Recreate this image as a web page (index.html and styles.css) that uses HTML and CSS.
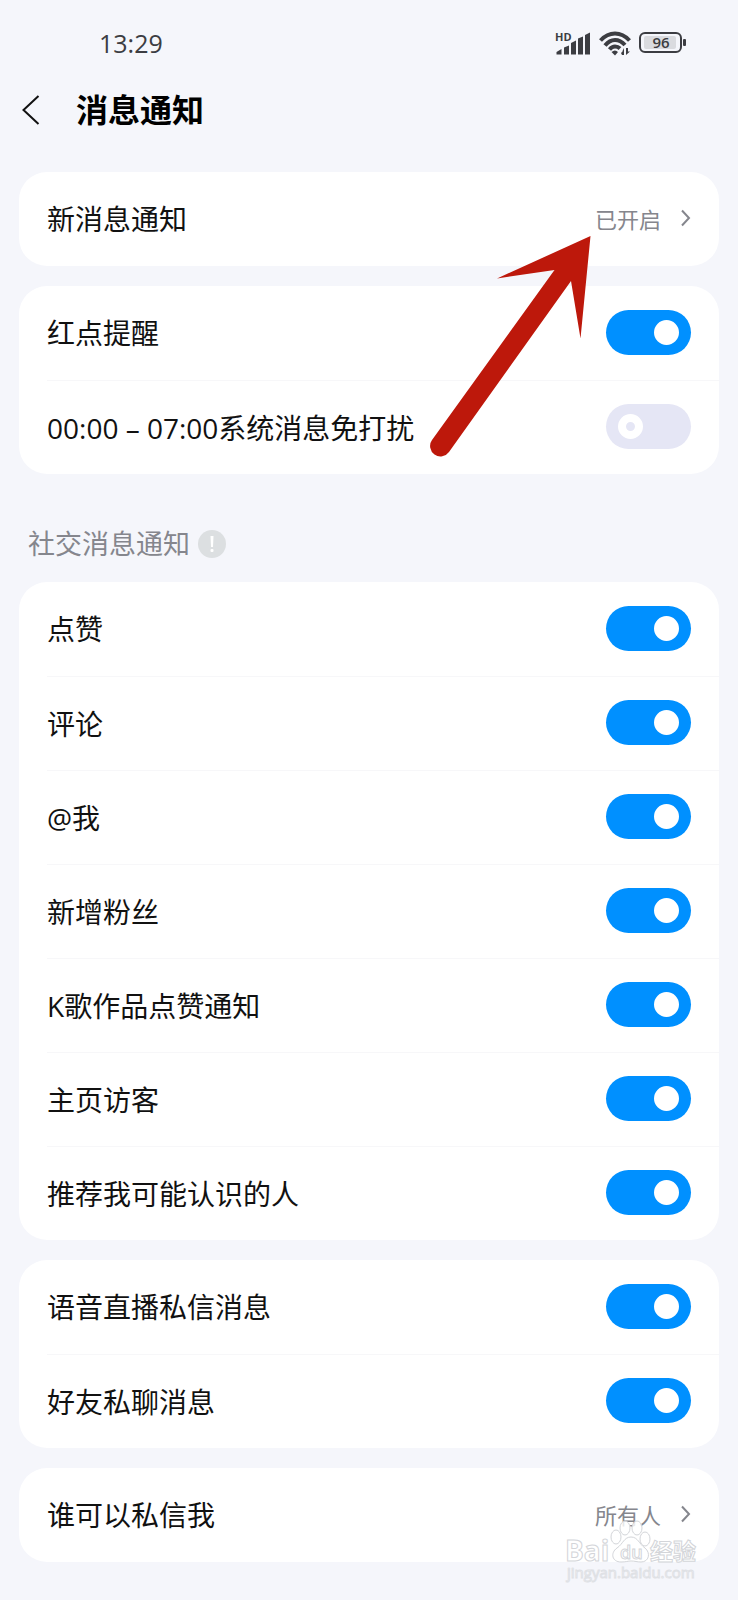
FILE: index.html
```html
<!DOCTYPE html>
<html lang="zh-CN">

<head>
	<meta charset="UTF-8">
	<meta name="viewport" content="width=device-width, initial-scale=1.0">
	<title>消息通知</title>
	<link rel="stylesheet" href="styles.css">
</head>

<body>
	<div class="statusbar">
		<span class="clock">13:29</span>
		<div class="status-icons">
			<svg class="signal" width="36" height="26" viewBox="0 0 36 26">
				<text x="0" y="11">HD</text>
				<path d="M1.500 24.500V22L6.500 19v5.500zM9 24.500v-7l5-2v9zM16 24.500V13l5-2.500v14zM23 24.500V8.500l5-2v18zM30 24.500V5l5-2.500v22z" />
			</svg>
			<svg class="wifi" width="32" height="25" viewBox="0 0 32 25">
				<path class="arc" d="M1.500 9.500Q8 2.500 16 2.500T30.500 9.500" />
				<path class="arc" d="M6 14.500Q10.500 9 16 9T26 14" />
				<path class="arc" d="M10.500 18.500Q13 15.500 16 15.500T21 17.500" />
				<path d="M12.500 21Q16 18 19 21L16 24.500z" />
				<path d="M22 22l3-3v5h-2zM27 17v7l4-3.500h-2V17zM25 17v7h-1.500v-4z" />
			</svg>
			<svg class="battery" width="48" height="22" viewBox="0 0 48 22">
				<rect class="shell" x="1" y="1" width="41" height="19" rx="5" />
				<rect class="level" x="5" y="4" width="32" height="13" rx="2" />
				<rect x="44" y="7" width="3" height="7" rx="1" />
				<text x="22" y="16">96</text>
			</svg>
		</div>
	</div>

	<header class="titlebar">
		<button class="back" type="button" aria-label="返回">
			<svg width="18" height="30" viewBox="0 0 18 30">
				<path d="M16.500 1L1.500 15L16.500 29" />
			</svg>
		</button>
		<h1>消息通知</h1>
	</header>

	<main class="settings">
		<section class="card first">
			<a class="row" href="#">
				<span>新消息通知</span>
				<span class="value">已开启
					<svg class="chevron" width="10" height="18" viewBox="0 0 10 18">
						<path d="M1 1.500l7 7.500l-7 7.500" />
					</svg>
				</span>
			</a>
			<svg class="pointer" width="164" height="224" viewBox="0 0 164 224">
				<path d="M162.500 2L69 44.500L126.500 36L4 206A10 10 0 0 0 21 218L143 47L152.500 104.500z" />
			</svg>
		</section>

		<section class="card">
			<label class="row"><span>红点提醒</span><input class="switch" type="checkbox" checked></label>
			<label class="row"><span>00:00 – 07:00系统消息免打扰</span><input class="switch" type="checkbox"></label>
		</section>

		<h2 class="group-title">社交消息通知
			<svg width="28" height="28" viewBox="0 0 28 28">
				<circle cx="14" cy="14" r="14" />
				<path d="M12.500 6h3l-.5 11h-2z" />
				<rect x="12.500" y="19" width="3" height="3" rx="1" />
			</svg>
		</h2>

		<section class="card">
			<label class="row"><span>点赞</span><input class="switch" type="checkbox" checked></label>
			<label class="row"><span>评论</span><input class="switch" type="checkbox" checked></label>
			<label class="row"><span>@我</span><input class="switch" type="checkbox" checked></label>
			<label class="row"><span>新增粉丝</span><input class="switch" type="checkbox" checked></label>
			<label class="row"><span>K歌作品点赞通知</span><input class="switch" type="checkbox" checked></label>
			<label class="row"><span>主页访客</span><input class="switch" type="checkbox" checked></label>
			<label class="row"><span>推荐我可能认识的人</span><input class="switch" type="checkbox" checked></label>
		</section>

		<section class="card">
			<label class="row"><span>语音直播私信消息</span><input class="switch" type="checkbox" checked></label>
			<label class="row"><span>好友私聊消息</span><input class="switch" type="checkbox" checked></label>
		</section>

		<section class="card last">
			<a class="row" href="#">
				<span>谁可以私信我</span>
				<span class="value">所有人
					<svg class="chevron" width="10" height="18" viewBox="0 0 10 18">
						<path d="M1 1.500l7 7.500l-7 7.500" />
					</svg>
				</span>
			</a>
			<svg class="watermark" width="136" height="66" viewBox="0 0 136 66">
				<text class="brand" x="1" y="41">Bai</text>
				<ellipse cx="52" cy="17" rx="5" ry="7" />
				<ellipse cx="61" cy="8" rx="5" ry="7" />
				<ellipse cx="73" cy="8" rx="5" ry="7" />
				<ellipse cx="81" cy="19" rx="5" ry="7" />
				<path d="M67 17C60 17 59 24 53 28C46 33 48 42 57 42C62 42 64 41 67 41C71 41 73 42 77 42C85 42 87 33 81 28C75 24 74 17 67 17z" />
				<text class="du" x="56" y="39">du</text>
				<text class="cjk" x="86" y="40">经验</text>
				<text class="url" x="3" y="58">jingyan.baidu.com</text>
			</svg>
		</section>
	</main>
</body>

</html>
```
FILE: styles.css
```css
* {
	box-sizing: border-box;
}

body {
	margin: 0;
	background-color: #f5f6fb;
	color: #111;
	font-family: "Open Sans", "Noto Sans CJK SC", sans-serif;
	font-size: 28px;
}

.statusbar {
	display: flex;
	justify-content: space-between;
	align-items: center;
	height: 86px;
	padding: 0 51px 0 99px;
	color: #3c3d42;
}

.clock {
	font-size: 25px;
	font-weight: 500;
}

.status-icons {
	display: flex;
	align-items: center;
	gap: 8px;
	fill: #3c3d42;
}

.status-icons svg {
	overflow: visible;
}

.status-icons text {
	font-family: "Open Sans", sans-serif;
}

.signal text {
	font-size: 11px;
	font-weight: 700;
}

.wifi .arc {
	fill: none;
	stroke: #3c3d42;
	stroke-width: 4;
}

.battery .shell {
	fill: none;
	stroke: #3c3d42;
	stroke-width: 2;
}

.battery .level {
	fill: #dadbdf;
}

.battery text {
	font-size: 15px;
	font-weight: 600;
	text-anchor: middle;
}

.titlebar {
	display: flex;
	align-items: center;
	gap: 36px;
	height: 48px;
	padding: 0 22px;
}

.titlebar h1 {
	margin: 0;
	font-size: 32px;
	font-weight: 700;
	line-height: 48px;
	color: #000;
}

.back {
	display: flex;
	padding: 0;
	border: none;
	background: none;
	cursor: pointer;
}

.back path {
	fill: none;
	stroke: #111;
	stroke-width: 2;
}

.settings {
	display: flex;
	flex-direction: column;
	gap: 20px;
	padding: 38px 19px 36px;
}

.card {
	border-radius: 28px;
	background-color: #fff;
}

.first,
.last {
	position: relative;
}

.row {
	display: flex;
	justify-content: space-between;
	align-items: center;
	height: 94px;
	margin-left: 28px;
	padding: 0 28px 2px 0;
	color: inherit;
	text-decoration: none;
	cursor: pointer;
}

.row + .row {
	border-top: 1px solid #f7f7f9;
}

.value {
	display: flex;
	align-items: center;
	gap: 20px;
	color: #85868d;
	font-size: 22px;
}

.chevron path {
	fill: none;
	stroke: #85868d;
	stroke-width: 2;
}

.switch {
	display: flex;
	align-items: center;
	appearance: none;
	width: 85px;
	height: 45px;
	margin: 0;
	padding: 0 12px;
	border-radius: 23px;
	background-color: #e5e6f5;
	cursor: pointer;
}

.switch::before {
	content: "";
	box-sizing: border-box;
	width: 25px;
	height: 25px;
	border: 8px solid #fff;
	border-radius: 50%;
}

.switch:checked {
	justify-content: flex-end;
	background-color: #0090ff;
}

.switch:checked::before {
	background-color: #fff;
}

.group-title {
	display: flex;
	align-items: center;
	gap: 8px;
	margin: 32px 0 0;
	padding-left: 9px;
	color: #85868d;
	font-size: 27px;
	font-weight: 400;
	line-height: 36px;
}

.group-title svg {
	fill: #fff;
}

.group-title circle {
	fill: #dcdfe1;
}

.pointer {
	position: absolute;
	top: 62px;
	right: 127px;
	fill: #bd180b;
	pointer-events: none;
}

.watermark {
	position: absolute;
	top: 52px;
	right: 19px;
	fill: #fff;
	fill-opacity: 0.8;
	stroke: #d3d5d9;
	stroke-width: 1;
	pointer-events: none;
}

.watermark text {
	font-family: "Open Sans", "Noto Sans CJK SC", sans-serif;
}

.watermark .brand {
	font-size: 28px;
	font-weight: 700;
}

.watermark .du {
	font-size: 18px;
	font-weight: 600;
}

.watermark .cjk {
	font-size: 23px;
	font-weight: 700;
}

.watermark .url {
	font-size: 15px;
	fill: #fff;
	stroke: #dfe1e5;
}
```
